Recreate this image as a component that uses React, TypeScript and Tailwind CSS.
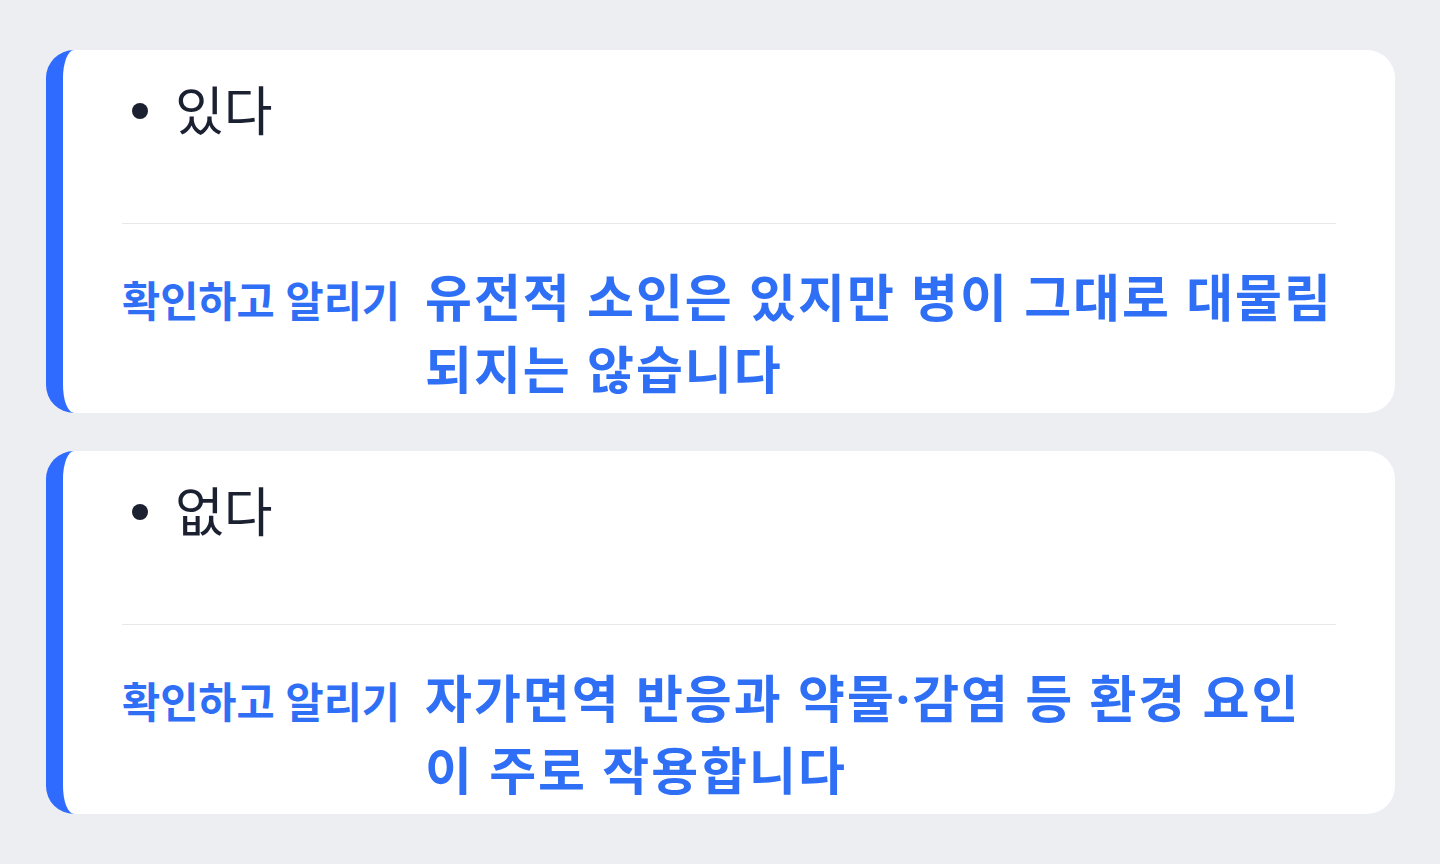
import React from 'react';

interface Item {
  title: string;
  label: string;
  answer: string;
}

const items: Item[] = [
  {
    title: '있다',
    label: '확인하고 알리기',
    answer: '유전적 소인은 있지만 병이 그대로 대물림되지는 않습니다',
  },
  {
    title: '없다',
    label: '확인하고 알리기',
    answer: '자가면역 반응과 약물·감염 등 환경 요인이 주로 작용합니다',
  },
];

// Latin face first so spaces and the middle dot stay narrow; hangul falls through to CJK
const font = { fontFamily: '"Noto Sans", "Noto Sans CJK KR", sans-serif' };

function AnswerCard({ item }: { item: Item }) {
  return (
    <div className="bg-white rounded-[28px] border-l-[17px] border-[#2f6bff] h-[363px] overflow-hidden px-[59px] pt-[25px]">
      <div className="flex items-center h-[72px]">
        <span className="w-[16px] h-[16px] rounded-full bg-[#1b2130] ml-[10px] mr-[27px] shrink-0" />
        <span className="text-[53px] leading-[72px] text-[#1b2130]">{item.title}</span>
      </div>
      <div className="mt-[76px] border-t border-[#e6e8ec]" />
      <div className="flex items-baseline gap-[28px] mt-[37px]">
        <span className="w-[275px] shrink-0 whitespace-nowrap text-[41.5px] leading-[72px] font-bold text-[#2f6ff5]">
          {item.label}
        </span>
        <p className="flex-1 text-[51px] leading-[72px] font-bold tracking-[2px] text-[#2f6ff5]">{item.answer}</p>
      </div>
    </div>
  );
}

export default function App() {
  return (
    <div className="min-h-screen bg-[#eceef2] pt-[50px] pl-[46px] pr-[45px]" style={font}>
      <div className="flex flex-col gap-[38px]">
        {items.map((item) => (
          <AnswerCard key={item.title} item={item} />
        ))}
      </div>
    </div>
  );
}
